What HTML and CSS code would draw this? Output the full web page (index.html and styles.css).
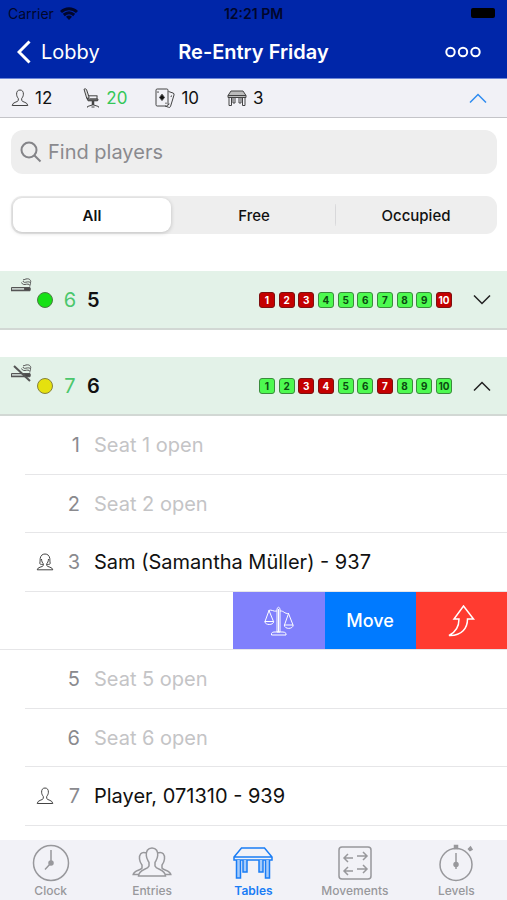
FILE: index.html
```html
<!DOCTYPE html>
<html lang="en">
<head>
<meta charset="utf-8">
<meta name="viewport" content="width=device-width, initial-scale=1">
<title>Re-Entry Friday</title>
<link rel="stylesheet" href="styles.css">
</head>
<body>
<svg class="defs" width="0" height="0" aria-hidden="true">
  <symbol id="person" viewBox="0 0 18 18"><path d="M9 1C6.600 1 5.500 2.800 5.600 5.200C5.700 7.500 6.700 8.600 7.300 9.500V11.500C6.500 13.300 1.500 13 1.200 16.500H16.800C16.500 13 11.500 13.300 10.700 11.500V9.500C11.300 8.600 12.300 7.500 12.400 5.200C12.500 2.800 11.400 1 9 1Z"/></symbol>
  <symbol id="woman" viewBox="0 0 18 18"><path d="M6.800 11.500C4.500 11.500 3.800 11 3.800 10.500C4.300 9 3.900 7.500 4.200 5.500C4.600 2.500 6.500 1 9 1S13.400 2.500 13.800 5.500C14.100 7.500 13.700 9 14.200 10.500C14.200 11 13.500 11.500 11.200 11.500M5.500 6C5.600 8.500 6.500 10 7.300 10.800V12.500C6.500 14.300 1.500 13.800 1.200 16.800H16.800C16.500 13.800 11.500 14.300 10.700 12.500V10.800C11.500 10 12.400 8.500 12.500 6"/></symbol>
  <symbol id="up" viewBox="0 0 18 10"><path d="M1 9.500L9 1.500L17 9.500"/></symbol>
  <symbol id="down" viewBox="0 0 18 10"><path d="M1 .5L9 8.500L17 .5"/></symbol>
  <symbol id="cigarette" viewBox="0 0 22 18"><path d="M1.500 9.500H20V12.500H1.500Z" fill="#c2ccc7"/><path d="M14.500 10H20V12.500H14.500Z" fill="#444"/><path d="M1 12.500H20" stroke-width="1.500"/><path d="M19.800 8.500C20.500 6.500 18.500 5.800 16.500 6.200S12.500 7 11.500 4.500M20 7C21.300 5 20 3.500 17.500 3.900S13.500 5 13 3M20.300 5C21.500 3 20 .8 17.500 .8S14.500 2 13 1.800"/></symbol>
</svg>

<header class="topbar">
  <div class="status">
    <span class="carrier">Carrier
      <svg class="wifi" viewBox="0 0 18 13"><path d="M1 5C5.500 .8 12.500 .8 17 5M3.800 8C7 5.200 11 5.200 14.200 8"/><path d="M6 9.800C7.700 8.200 10.300 8.200 12 9.800L9 13Z" fill="currentColor" stroke="none"/></svg>
    </span>
    <time class="time">12:21 PM</time>
    <span class="power"><span class="battery"></span></span>
  </div>
  <nav class="navbar">
    <a class="back" href="#lobby"><svg viewBox="0 0 14 24"><path d="M12.500 1.500L2 12L12.500 22.500"/></svg>Lobby</a>
    <h1 class="title">Re-Entry Friday</h1>
    <button class="more" type="button" aria-label="More"><svg viewBox="0 0 36 12"><circle cx="5.500" cy="6" r="4.200"/><circle cx="18" cy="6" r="4.200"/><circle cx="30.500" cy="6" r="4.200"/></svg></button>
  </nav>
</header>

<section class="stats">
  <span class="stat"><svg class="icon" viewBox="0 0 18 18"><use href="#person"/></svg>12</span>
  <span class="stat free"><svg class="icon wide" viewBox="0 0 20 20"><path d="M4 1.200Q5.500 .3 6.500 1.500L9.200 9.500L6.800 10.500Z" fill="#ddd"/><path d="M8.800 7.800H17.500M17 8V11M7 10.500L8 12.800H17.500Q18.800 12 17.500 10.800H9.500Z"/><path d="M8 12H18" stroke-width="1.500"/><path d="M13 13V17" stroke-width="2.500"/><path d="M7.500 19.500V18.500L13 16.800L18.500 18.500V19.500M11.500 19H14.500"/></svg>20</span>
  <span class="stat"><svg class="icon wide" viewBox="0 0 20 20"><rect x="1" y="1" width="12" height="17" rx="1.200"/><path d="M13.500 3.500L18 5Q19.500 5.500 19 7L15.500 18.500Q15 19.800 13.700 19.300L10 18"/><path d="M7 6.200L9.500 9.500L7 12.500L4.500 9.500Z" fill="#111"/><path d="M3 3.200V5M11 14.500V16M16.500 7.500L16 9M14 15.500L13.500 17"/></svg>10</span>
  <span class="stat"><svg class="icon wide" viewBox="0 0 20 16"><path d="M4 1H16L19 5.500V7.500H1V5.500Z" fill="#bbb"/><path d="M1 5.500H19M2 7.500V15.500H4.500V7.500M15.500 7.500V15.500H18V7.500M6 7.500V13H8V7.500M12 7.500V13H14V7.500"/></svg>3</span>
  <button class="collapse" type="button" aria-label="Collapse summary"><svg class="chevron" viewBox="0 0 18 10"><use href="#up"/></svg></button>
</section>

<main class="content">
  <div class="filters">
    <label class="search">
      <svg viewBox="0 0 22 22"><circle cx="9" cy="9" r="7.500"/><path d="M14.500 14.500L20.500 20.500"/></svg>
      <input type="search" placeholder="Find players" aria-label="Find players">
    </label>
    <div class="segments">
      <button class="segment selected" type="button">All</button>
      <button class="segment" type="button">Free</button>
      <button class="segment divided" type="button">Occupied</button>
    </div>
  </div>

  <section class="table-head">
    <svg class="smoke" viewBox="0 0 22 18"><use href="#cigarette"/></svg>
    <span class="dot green"></span>
    <span class="open-count">6</span>
    <h2 class="table-no">5</h2>
    <span class="seats"><b class="taken">1</b><b class="taken">2</b><b class="taken">3</b><b>4</b><b>5</b><b>6</b><b>7</b><b>8</b><b>9</b><b class="taken">10</b></span>
    <button class="toggle" type="button" aria-label="Expand table 5"><svg class="chevron" viewBox="0 0 18 10"><use href="#down"/></svg></button>
  </section>

  <section class="table-head">
    <svg class="smoke" viewBox="0 0 22 18"><use href="#cigarette"/><path d="M4 2L20 17" stroke-width="2"/></svg>
    <span class="dot yellow"></span>
    <span class="open-count">7</span>
    <h2 class="table-no">6</h2>
    <span class="seats"><b>1</b><b>2</b><b class="taken">3</b><b class="taken">4</b><b>5</b><b>6</b><b class="taken">7</b><b>8</b><b>9</b><b>10</b></span>
    <button class="toggle" type="button" aria-label="Collapse table 6"><svg class="chevron" viewBox="0 0 18 10"><use href="#up"/></svg></button>
  </section>

  <ul class="rows">
    <li class="row"><span class="who"></span><span class="num">1</span><span class="name open">Seat 1 open</span></li>
    <li class="row"><span class="who"></span><span class="num">2</span><span class="name open">Seat 2 open</span></li>
    <li class="row"><span class="who"><svg class="icon" viewBox="0 0 18 18"><use href="#woman"/></svg></span><span class="num">3</span><span class="name">Sam (Samantha Müller) - 937</span></li>
    <li class="row swiped">
      <button class="action balance" type="button" aria-label="Balance"><svg viewBox="0 0 30 32"><path d="M13 3.500Q14.500 1 16 3.500V27H13ZM14.500 4V27M7.500 28.500Q8 27 10 27H19Q21 27 22 28.500V30H7.500ZM13 6C9 7 8 4 4.500 5.500M16 6C20 5.500 20 9 25 8.500M5 5.500L1 16.500M5 5.500L9.500 16.500M.8 16.500H9.700C9.500 20.500 1 20.500 .8 16.500ZM24.500 8.500L20.500 20M24.500 8.500L29 20M20.300 20H29.200C29 24.500 20.500 24.500 20.300 20Z"/></svg></button>
      <button class="action move" type="button">Move</button>
      <button class="action bust" type="button" aria-label="Bust out"><svg viewBox="0 0 30 32"><path d="M17.500 1L27.500 14H21.500C21.500 23 16 31 3 30.500C10 27 13 22 13 14H8Z"/></svg></button>
    </li>
    <li class="row"><span class="who"></span><span class="num">5</span><span class="name open">Seat 5 open</span></li>
    <li class="row"><span class="who"></span><span class="num">6</span><span class="name open">Seat 6 open</span></li>
    <li class="row"><span class="who"><svg class="icon" viewBox="0 0 18 18"><use href="#person"/></svg></span><span class="num">7</span><span class="name">Player, 071310 - 939</span></li>
  </ul>
</main>

<nav class="tabs">
  <a class="tab" href="#clock"><svg viewBox="0 0 40 38"><circle cx="20" cy="19" r="17.500"/><path d="M20 6V19L14 25.500"/><circle cx="20" cy="19" r="2" fill="currentColor"/></svg>Clock</a>
  <a class="tab" href="#entries"><svg viewBox="0 0 40 38"><path d="M20 4C15.500 4 14 7.500 14.300 11.500C14.500 15 16 16.500 17 18.500V22C15.500 26 7 25 6.500 32H33.500C33 25 24.500 26 23 22V18.500C24 16.500 25.500 15 25.700 11.500C26 7.500 24.500 4 20 4ZM14.500 9C9 7 7 11 7.500 15C7.800 18 9 19.500 10 21V24C8.500 26.500 2 26.500 1.200 30.500H7M25.500 9C31 7 33 11 32.500 15C32.200 18 31 19.500 30 21V24C31.500 26.500 38 26.500 38.800 30.500H33"/></svg>Entries</a>
  <a class="tab active" href="#tables"><svg viewBox="0 0 40 38"><path d="M8.500 4H31.500L39 13V16H1V13ZM1 13H39"/><path d="M3.500 16V34H7.500V16M10 16V28H14V16M26 16V28H30V16M32.500 16V34H36.500V16" fill="#a5cbfa"/></svg>Tables</a>
  <a class="tab" href="#movements"><svg viewBox="0 0 40 38"><rect x="4" y="3" width="32" height="32" rx="3"/><path d="M18 14H9M13 10L9 14L13 18M22 12H32M28 8L32 12L28 16M18 27H9M13 23L9 27L13 31M22 25H32M28 21L32 25L28 29"/></svg>Movements</a>
  <a class="tab" href="#levels"><svg viewBox="0 0 40 38"><circle cx="20" cy="20.500" r="16"/><path d="M20 9V25"/><circle cx="20" cy="20.500" r="2" fill="currentColor"/><path d="M18.500 1.500H21.500V4.500H18.500ZM32.500 5L34.500 3L36 5.500L34 6.500Z" fill="currentColor"/></svg>Levels</a>
</nav>
</body>
</html>
```
FILE: styles.css
```css
* {
  box-sizing: border-box;
}

body {
  margin: 0;
  height: 100vh;
  display: flex;
  flex-direction: column;
  background: #fff;
  color: #111;
  font-family: Inter, "Liberation Sans", sans-serif;
  font-size: 20px;
}

button,
input {
  margin: 0;
  padding: 0;
  border: 0;
  background: none;
  color: inherit;
  font: inherit;
}

a {
  color: inherit;
  text-decoration: none;
}

h1,
h2 {
  margin: 0;
}

svg {
  display: block;
  fill: none;
  stroke: currentColor;
}

.defs {
  position: absolute;
}

/* Header */
.topbar {
  background: #0026a9;
  color: #fff;
  border-bottom: 1px solid #6d86d8;
}

.status {
  display: grid;
  grid-template-columns: 1fr auto 1fr;
  align-items: center;
  height: 26px;
  padding: 0 8px;
  color: #00062c;
  font-size: 14px;
}

.carrier {
  display: flex;
  align-items: center;
  gap: 6px;
}

.wifi {
  width: 18px;
  height: 13px;
  stroke-width: 3;
}

.time {
  font-weight: 600;
}

.power {
  justify-self: end;
}

.battery {
  display: block;
  width: 24px;
  height: 10px;
  margin-right: 4px;
  border-radius: 2px;
  background: #000;
}

.navbar {
  display: grid;
  grid-template-columns: 1fr auto 1fr;
  align-items: center;
  height: 52px;
  padding: 0 17px;
}

.back {
  display: flex;
  align-items: center;
  gap: 10px;
}

.back svg {
  width: 14px;
  height: 24px;
  stroke-width: 3;
}

.title {
  font-size: 20px;
  font-weight: 600;
}

.more {
  justify-self: end;
  margin-right: 9px;
}

.more svg {
  width: 36px;
  height: 12px;
  stroke-width: 2;
}

/* Summary strip */
.stats {
  display: flex;
  align-items: center;
  gap: 28px;
  height: 39px;
  padding: 0 20px 0 11px;
  background: #f1f1f6;
  border-bottom: 1px solid #c4c4c8;
  font-size: 17px;
}

.stat {
  display: flex;
  align-items: center;
  gap: 6px;
}

.icon {
  width: 18px;
  height: 20px;
  color: #444;
  stroke-width: 1;
}

.wide {
  width: 20px;
}

.free {
  color: #34c759;
}

.collapse {
  margin-left: auto;
  color: #2f8cf0;
}

.chevron {
  width: 18px;
  height: 10px;
  stroke-width: 1.5;
}

/* Filters */
.content {
  flex: 1;
  min-height: 0;
  overflow: auto;
  scrollbar-width: none;
}

.filters {
  display: grid;
  gap: 22px;
  padding: 12px 10px 37px 11px;
}

.search {
  display: flex;
  align-items: center;
  gap: 6px;
  height: 44px;
  padding: 0 9px;
  border-radius: 12px;
  background: #eee;
  color: #848488;
}

.search svg {
  width: 22px;
  height: 22px;
  stroke-width: 2;
}

.search input {
  flex: 1;
  min-width: 0;
  outline: 0;
}

.search input::placeholder {
  color: #8a8a8e;
}

.segments {
  display: grid;
  grid-template-columns: repeat(3, 1fr);
  height: 38px;
  padding: 2px 0;
  border-radius: 11px;
  background: #eee;
}

.segment {
  border-radius: 9px;
  font-size: 15px;
  font-weight: 500;
}

.selected {
  margin: 0 2px;
  background: #fff;
  box-shadow: 0 1px 4px rgba(0, 0, 0, 0.2);
  font-weight: 600;
}

.divided {
  background: linear-gradient(#d8d8da, #d8d8da) left center / 1px 22px no-repeat;
}

/* Poker table headers */
.table-head {
  display: flex;
  align-items: center;
  height: 59px;
  padding: 0 16px 0 10px;
  background: #e3f2e8;
  border-bottom: 2px solid #d2d8d4;
}

.table-head + .table-head {
  margin-top: 27px;
}

.smoke {
  align-self: flex-start;
  width: 22px;
  height: 18px;
  margin: 7px 5px 0 0;
  color: #555;
}

.dot {
  width: 16px;
  height: 16px;
  border: 1px solid #4c7a45;
  border-radius: 50%;
}

.green {
  background: #16e116;
}

.yellow {
  background: #e5e10e;
  border-color: #85813c;
}

.open-count {
  width: 34px;
  text-align: center;
  color: #4bc76c;
}

.table-no {
  font-size: 20px;
  font-weight: 600;
}

.seats {
  display: flex;
  justify-content: space-between;
  width: 193px;
  margin-left: auto;
}

.seats b {
  display: flex;
  align-items: center;
  justify-content: center;
  width: 16px;
  height: 16px;
  border: 1px solid #3a8c3c;
  border-radius: 3px;
  background: #4dfa50;
  color: #0b4a10;
  font-size: 10px;
}

.seats .taken {
  border-color: #7d1010;
  background: #c40000;
  color: #fff;
}

.toggle {
  margin-left: 21px;
  color: #222;
}

/* Seat rows */
.rows {
  margin: 0;
  padding: 0;
  list-style: none;
}

.row {
  display: flex;
  align-items: center;
  height: 59px;
  margin-left: 25px;
  border-bottom: 1px solid #e6e6e8;
}

.row:nth-child(even) {
  height: 58px;
}

.who {
  width: 32px;
  padding-left: 11px;
}

.num {
  width: 23px;
  text-align: right;
  color: #8a8a8e;
}

.name {
  margin-left: 14px;
}

.open {
  color: #c4c4c6;
}

.swiped {
  display: grid;
  grid-template-columns: repeat(3, 18%);
  align-items: stretch;
  justify-content: end;
  margin-left: 0;
}

.action {
  display: grid;
  place-items: center;
  color: #fff;
  font-size: 18px;
  font-weight: 500;
}

.action svg {
  width: 30px;
  height: 32px;
}

.balance {
  background: #8080fc;
}

.move {
  background: #007aff;
}

.bust {
  background: #ff3b30;
}

.bust svg {
  stroke-width: 1.5;
}

/* Tab bar */
.tabs {
  display: grid;
  grid-template-columns: repeat(5, 1fr);
  height: 60px;
  background: #f2f2f7;
}

.tab {
  display: flex;
  flex-direction: column;
  align-items: center;
  gap: 1px;
  padding-top: 4px;
  color: #98989c;
  font-size: 12px;
  font-weight: 500;
}

.tab svg {
  width: 40px;
  height: 38px;
  stroke-width: 1.5;
}

.active {
  color: #1a7df5;
  font-weight: 600;
}
```
